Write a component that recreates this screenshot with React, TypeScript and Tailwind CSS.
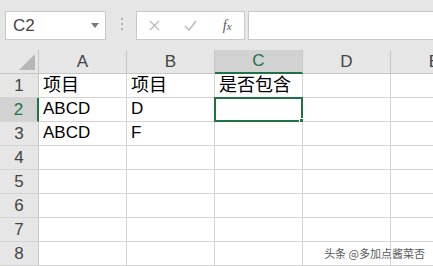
import React from 'react';

// ============================================================================
// SPREADSHEET
// Excel-like grid with name box, formula bar and selected cell
// ============================================================================

const COLS = ['A', 'B', 'C', 'D', 'E'];
const ROWS = [1, 2, 3, 4, 5, 6, 7, 8];

const DATA: Record<string, string> = {
  A1: '项目',
  B1: '项目',
  C1: '是否包含',
  A2: 'ABCD',
  B2: 'D',
  A3: 'ABCD',
  B3: 'F',
};

const SELECTED = { col: 'C', row: 2 };

const FONT = '"Liberation Sans", "Noto Sans CJK SC", Arial, sans-serif';

function Toolbar() {
  return (
    <div className="flex items-start h-[50px] bg-[#e6e6e6] pt-[11px] pl-[5px]">
      {/* Name box */}
      <div className="flex items-center justify-between w-[101px] h-[29px] bg-white border border-[#c8c8c8] pl-[7px] pr-[6px]">
        <span className="text-[17px] text-[#444] leading-none">C2</span>
        <svg width="8" height="5" viewBox="0 0 8 5">
          <path d="M0 0 L8 0 L4 5 Z" fill="#7a7a7a" />
        </svg>
      </div>

      {/* Separator dots */}
      <div className="ml-[15px] mt-[7px] flex flex-col gap-[3px]">
        <div className="w-[2px] h-[2px] bg-[#b0b0b0]" />
        <div className="w-[2px] h-[2px] bg-[#b0b0b0]" />
        <div className="w-[2px] h-[2px] bg-[#b0b0b0]" />
      </div>

      {/* Formula buttons */}
      <div className="ml-[13px] flex items-center w-[109px] h-[29px] bg-white border border-[#c8c8c8]">
        <div className="w-[36px] flex justify-center">
          <svg width="11" height="11" viewBox="0 0 11 11">
            <path d="M1 1 L10 10 M10 1 L1 10" stroke="#bdbdbd" strokeWidth="1.4" />
          </svg>
        </div>
        <div className="w-[36px] flex justify-center">
          <svg width="13" height="11" viewBox="0 0 13 11">
            <path d="M1 6 L5 10 L12 1" stroke="#bdbdbd" strokeWidth="1.6" fill="none" />
          </svg>
        </div>
        <div className="w-[36px] flex justify-center pl-[2px]">
          <span
            className="italic text-[14px] text-[#555] leading-none"
            style={{ fontFamily: '"Liberation Serif", serif' }}
          >
            f<span className="text-[11px]">x</span>
          </span>
        </div>
      </div>

      {/* Formula input */}
      <div className="ml-[3px] flex-1 h-[29px] bg-white border border-[#c8c8c8] border-r-0" />
    </div>
  );
}

function Sheet() {
  return (
    <div className="grid grid-cols-[39px_88px_88px_88px_88px_88px] grid-rows-[24px_repeat(8,24px)]">
      {/* Corner */}
      <div className="relative bg-[#e6e6e6] border-r border-b border-[#c6c6c6]">
        <svg className="absolute right-[3px] bottom-[3px]" width="16" height="16" viewBox="0 0 16 16">
          <path d="M16 0 L16 16 L0 16 Z" fill="#b7b7b7" />
        </svg>
      </div>

      {/* Column headers */}
      {COLS.map((c) => {
        const active = c === SELECTED.col;
        return (
          <div
            key={c}
            className={
              active
                ? 'flex items-center justify-center bg-[#d2d2d2] border-r border-[#c6c6c6] border-b-2 border-b-[#217346] text-[#217346] text-[17px]'
                : 'flex items-center justify-center bg-[#e6e6e6] border-r border-b border-[#c6c6c6] text-[#444] text-[17px]'
            }
          >
            {c}
          </div>
        );
      })}

      {/* Rows */}
      {ROWS.map((r) => (
        <React.Fragment key={r}>
          <div
            className={
              r === SELECTED.row
                ? 'flex items-center justify-center bg-[#d2d2d2] border-r-2 border-r-[#217346] border-b border-[#d4d4d4] text-[#217346] text-[17px]'
                : 'flex items-center justify-center bg-[#e6e6e6] border-r border-b border-[#c6c6c6] border-b-[#d4d4d4] text-[#444] text-[17px]'
            }
          >
            {r}
          </div>
          {COLS.map((c) => {
            const key = `${c}${r}`;
            const value = DATA[key];
            const selected = c === SELECTED.col && r === SELECTED.row;
            const cjk = value ? /[\u4e00-\u9fff]/.test(value) : false;
            return (
              <div
                key={key}
                className="relative flex items-end pl-[4px] pb-[1px] bg-white border-r border-b border-[#d4d4d4] text-black leading-[22px] whitespace-nowrap"
              >
                {value && <span className={cjk ? 'text-[18px]' : 'text-[17px]'}>{value}</span>}
                {selected && (
                  <div className="absolute -left-[1px] -top-[1px] -right-[1px] -bottom-[1px] border-2 border-[#217346]">
                    <div className="absolute -right-[4px] -bottom-[4px] w-[6px] h-[6px] bg-[#217346] border border-white" />
                  </div>
                )}
              </div>
            );
          })}
        </React.Fragment>
      ))}
    </div>
  );
}

export default function App() {
  return (
    <div className="relative w-[433px] h-[266px] overflow-hidden bg-white" style={{ fontFamily: FONT }}>
      <Toolbar />
      <Sheet />

      {/* Watermark */}
      <div
        className="absolute right-[8px] bottom-[7px] text-[11px] text-[#5a5a5a] leading-none [text-shadow:0_0_2px_#fff,0_0_1px_#fff]"
        style={{ fontFamily: '"Noto Sans CJK SC", sans-serif' }}
      >
        头条 @多加点酱菜否
      </div>
    </div>
  );
}
